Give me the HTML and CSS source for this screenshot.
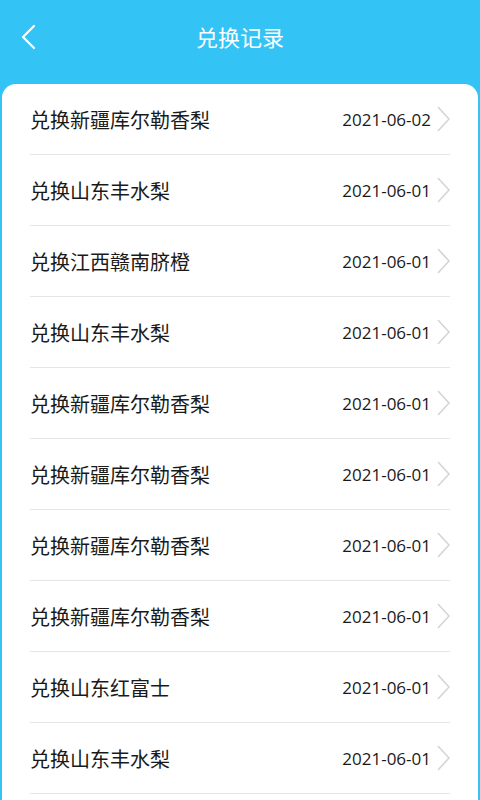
FILE: index.html
```html
<!DOCTYPE html>
<html lang="zh-CN">
<head>
    <meta charset="UTF-8">
    <meta name="viewport" content="width=device-width, initial-scale=1.0">
    <title>兑换记录</title>
    <link rel="stylesheet" href="styles.css">
</head>
<body>
    <div class="header">
        <span class="back">
            <svg width="16" height="26" viewBox="0 0 16 26"><path d="M14 2 L3 13 L14 24" fill="none" stroke="#fff" stroke-width="2.2" stroke-linecap="round" stroke-linejoin="round"/></svg>
        </span>
        <h1>兑换记录</h1>
    </div>

    <div class="card">
        <div class="row"><span class="name">兑换新疆库尔勒香梨</span><span class="date">2021-06-02</span><span class="arrow"><svg width="14" height="26" viewBox="0 0 14 26"><path d="M2 1 L13 13 L2 25" fill="none" stroke="#d4d4d4" stroke-width="1.6"/></svg></span></div>
        <div class="row"><span class="name">兑换山东丰水梨</span><span class="date">2021-06-01</span><span class="arrow"><svg width="14" height="26" viewBox="0 0 14 26"><path d="M2 1 L13 13 L2 25" fill="none" stroke="#d4d4d4" stroke-width="1.6"/></svg></span></div>
        <div class="row"><span class="name">兑换江西赣南脐橙</span><span class="date">2021-06-01</span><span class="arrow"><svg width="14" height="26" viewBox="0 0 14 26"><path d="M2 1 L13 13 L2 25" fill="none" stroke="#d4d4d4" stroke-width="1.6"/></svg></span></div>
        <div class="row"><span class="name">兑换山东丰水梨</span><span class="date">2021-06-01</span><span class="arrow"><svg width="14" height="26" viewBox="0 0 14 26"><path d="M2 1 L13 13 L2 25" fill="none" stroke="#d4d4d4" stroke-width="1.6"/></svg></span></div>
        <div class="row"><span class="name">兑换新疆库尔勒香梨</span><span class="date">2021-06-01</span><span class="arrow"><svg width="14" height="26" viewBox="0 0 14 26"><path d="M2 1 L13 13 L2 25" fill="none" stroke="#d4d4d4" stroke-width="1.6"/></svg></span></div>
        <div class="row"><span class="name">兑换新疆库尔勒香梨</span><span class="date">2021-06-01</span><span class="arrow"><svg width="14" height="26" viewBox="0 0 14 26"><path d="M2 1 L13 13 L2 25" fill="none" stroke="#d4d4d4" stroke-width="1.6"/></svg></span></div>
        <div class="row"><span class="name">兑换新疆库尔勒香梨</span><span class="date">2021-06-01</span><span class="arrow"><svg width="14" height="26" viewBox="0 0 14 26"><path d="M2 1 L13 13 L2 25" fill="none" stroke="#d4d4d4" stroke-width="1.6"/></svg></span></div>
        <div class="row"><span class="name">兑换新疆库尔勒香梨</span><span class="date">2021-06-01</span><span class="arrow"><svg width="14" height="26" viewBox="0 0 14 26"><path d="M2 1 L13 13 L2 25" fill="none" stroke="#d4d4d4" stroke-width="1.6"/></svg></span></div>
        <div class="row"><span class="name">兑换山东红富士</span><span class="date">2021-06-01</span><span class="arrow"><svg width="14" height="26" viewBox="0 0 14 26"><path d="M2 1 L13 13 L2 25" fill="none" stroke="#d4d4d4" stroke-width="1.6"/></svg></span></div>
        <div class="row"><span class="name">兑换山东丰水梨</span><span class="date">2021-06-01</span><span class="arrow"><svg width="14" height="26" viewBox="0 0 14 26"><path d="M2 1 L13 13 L2 25" fill="none" stroke="#d4d4d4" stroke-width="1.6"/></svg></span></div>
    </div>
</body>
</html>
```

FILE: styles.css
```css
body {
    margin: 0;
    background-color: #33c4f5;
    font-family: "Noto Sans CJK SC", "Noto Sans", sans-serif;
    height: 800px;
    overflow: hidden;
}
.header {
    height: 84px;
    display: flex;
    align-items: flex-start;
    justify-content: center;
    position: relative;
}
.header h1 {
    margin: 0;
    padding-top: 18px;
    font-size: 22px;
    font-weight: normal;
    color: #fff;
    line-height: 36px;
}
.back {
    position: absolute;
    left: 20px;
    top: 24px;
}
.card {
    background-color: #fff;
    margin: 0 2px;
    border-radius: 14px 14px 0 0;
    padding: 0 28px;
    height: 716px;
}
.row {
    display: flex;
    align-items: center;
    height: 70px;
    border-bottom: 1px solid #e6e6e6;
}
.name {
    flex: 1;
    font-size: 20px;
    color: #1a1a1a;
}
.date {
    font-family: "Open Sans", "Noto Sans", sans-serif;
    font-size: 17px;
    color: #1a1a1a;
    margin-right: 5px;
}
.arrow {
    display: flex;
}
```
